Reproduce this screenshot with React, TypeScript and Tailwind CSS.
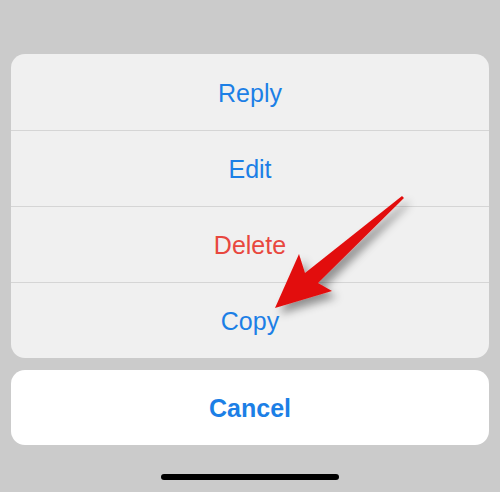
const actions = [
  { label: "Reply", color: "text-[#1c7fe6]" },
  { label: "Edit", color: "text-[#1c7fe6]" },
  { label: "Delete", color: "text-[#e8473e]" },
  { label: "Copy", color: "text-[#1c7fe6]" },
]

function Arrow() {
  return (
    <svg className="absolute left-0 top-0 pointer-events-none" width="500" height="492" viewBox="0 0 500 492">
      <defs>
        <filter id="shadow" x="-30%" y="-30%" width="170%" height="170%">
          <feDropShadow dx="5" dy="6" stdDeviation="4.5" floodColor="#000" floodOpacity="0.4" />
        </filter>
      </defs>
      <polygon
        points="402,196 305,273 299,254 275,308 332,291 318,283 404,198"
        fill="#e2100f"
        filter="url(#shadow)"
      />
    </svg>
  )
}

export default function App() {
  return (
    <div
      className="relative w-[500px] h-[492px] overflow-hidden bg-[#cbcbcb] flex flex-col items-center"
      style={{ fontFamily: '"Liberation Sans", Arial, sans-serif' }}
    >
      <div className="mt-[54px] w-[478px] rounded-[14px] bg-[#f0f0f0] flex flex-col">
        {actions.map((a, i) => (
          <div
            key={a.label}
            className={`h-[76px] pt-[3px] flex items-center justify-center text-[25px] ${a.color} ${
              i > 0 ? "border-t border-[#d5d5d5]" : ""
            }`}
          >
            {a.label}
          </div>
        ))}
      </div>
      <div className="mt-[12px] w-[478px] h-[75px] pt-[2px] rounded-[14px] bg-white flex items-center justify-center text-[25px] font-bold text-[#1c7fe6]">
        Cancel
      </div>
      <div className="mt-[29px] w-[178px] h-[6px] rounded-full bg-black" />
      <Arrow />
    </div>
  )
}
